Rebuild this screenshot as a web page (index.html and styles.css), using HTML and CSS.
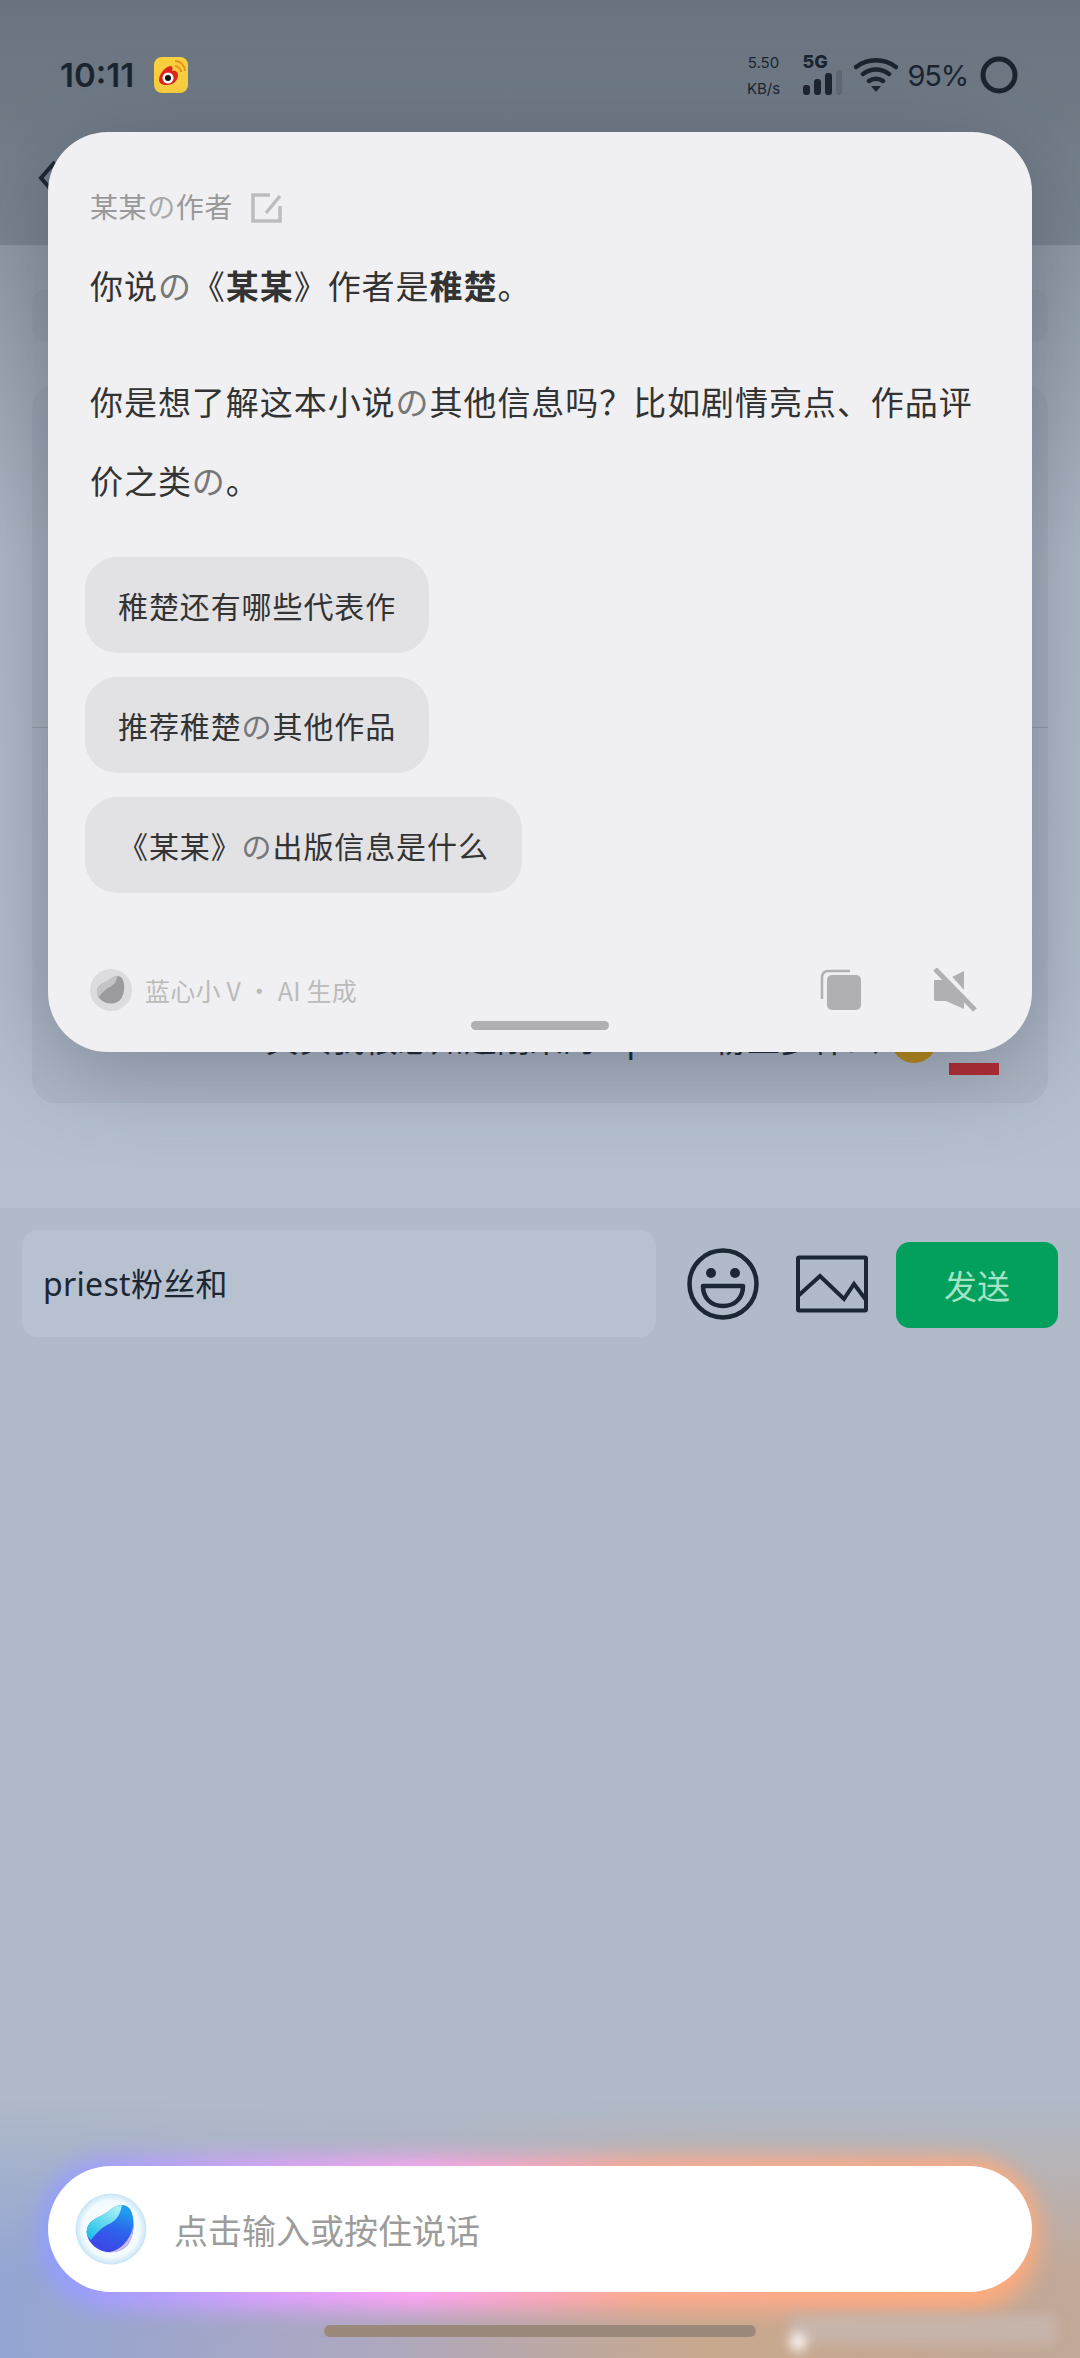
FILE: index.html
```html
<!DOCTYPE html>
<html lang="zh-CN">
<head>
    <meta charset="UTF-8">
    <meta name="viewport" content="width=device-width, initial-scale=1.0">
    <title>蓝心小V</title>
    <link rel="stylesheet" href="styles.css">
</head>
<body>
<div class="screen">
    <header class="topbar">
        <div class="status">
            <span class="time">10:11</span>
            <svg class="weibo" viewBox="0 0 34 36">
                <rect x="0" y="0" width="34" height="36" rx="8" fill="#fbd13f"/>
                <path d="M5 23c0-6 6-13 11-14 3 0 3 3 2 5 3-1 6 0 6 4 0 6-5 10-11 10-5 0-8-2-8-5z" fill="#e0261c"/>
                <circle cx="14" cy="21" r="5.5" fill="#fff"/>
                <circle cx="14" cy="21" r="3" fill="#111"/>
                <path d="M21 9c3 0 6 3 6 6M21 4c6 0 10 5 10 10" fill="none" stroke="#e9931f" stroke-width="2"/>
            </svg>
            <div class="status-right">
                <div class="speed"><span>5.50</span><span>KB/s</span></div>
                <div class="net">
                    <span class="net-label">5G</span>
                    <svg class="bars" viewBox="0 0 40 26">
                        <rect x="0" y="15" width="7" height="10" rx="3" fill="#1b2530"/>
                        <rect x="11" y="9" width="7" height="16" rx="3" fill="#1b2530"/>
                        <rect x="22" y="3" width="7" height="22" rx="3" fill="#1b2530"/>
                        <rect x="33" y="0" width="6" height="25" rx="3" fill="#1b2530" opacity=".18"/>
                    </svg>
                </div>
                <svg class="wifi" viewBox="0 0 44 36">
                    <path d="M2 10c12-9 28-9 40 0M9 17c8-6 18-6 26 0M15 24c4-3 10-3 14 0" fill="none" stroke="#1b2530" stroke-width="4.5" stroke-linecap="round"/>
                    <path d="M17 29h10l-5 6z" fill="#1b2530"/>
                </svg>
                <span class="battery">95%</span>
                <svg class="ring" viewBox="0 0 38 38"><circle cx="19" cy="19" r="16" fill="none" stroke="#1b2530" stroke-width="5"/></svg>
            </div>
        </div>
        <svg class="back" viewBox="0 0 20 40"><path d="M17 4L3 20l14 16" fill="none" stroke="#1b2530" stroke-width="4"/></svg>
    </header>

    <main class="chat">
        <div class="search"></div>
        <section class="list">
            <div class="list-top"></div>
            <div class="list-bottom">
                <span class="peek">其实我很想知道刚来的mpriest粉丝多什么</span>
                <span class="coin"></span>
                <span class="flag"></span>
            </div>
        </section>
    </main>

    <section class="composer">
        <div class="input">priest粉丝和</div>
        <svg class="smile" viewBox="0 0 72 72">
            <circle cx="36" cy="36" r="33.5" fill="none" stroke="#1b2733" stroke-width="4.5"/>
            <circle cx="24" cy="25" r="5" fill="#1b2733"/>
            <circle cx="48" cy="25" r="5" fill="#1b2733"/>
            <path d="M16 38h40c0 12-8 20-20 20S16 50 16 38z" fill="none" stroke="#1b2733" stroke-width="4.5" stroke-linejoin="round"/>
        </svg>
        <svg class="picture" viewBox="0 0 72 58">
            <rect x="2" y="2.5" width="68" height="53" rx="1" fill="none" stroke="#1b2733" stroke-width="4"/>
            <path d="M2 41l22-20 24 23 10-15 12 16" fill="none" stroke="#1b2733" stroke-width="4"/>
        </svg>
        <button class="send">发送</button>
    </section>

    <section class="assistant">
        <div class="pill-wrap">
            <div class="pill">
                <svg class="orb" viewBox="0 0 72 72">
                    <defs>
                        <radialGradient id="orbHalo" cx="0.5" cy="0.5" r="0.5">
                            <stop offset="0" stop-color="#ffffff"/>
                            <stop offset=".8" stop-color="#f2fafe"/>
                            <stop offset="1" stop-color="#c6e4f5"/>
                        </radialGradient>
                        <linearGradient id="orbFill" x1="0.7" y1="0.1" x2="0.4" y2="0.9">
                            <stop offset="0" stop-color="#1f9cf0"/>
                            <stop offset=".5" stop-color="#2d62ee"/>
                            <stop offset="1" stop-color="#3d49e6"/>
                        </linearGradient>
                        <linearGradient id="orbLight" x1="0.7" y1="0" x2="0.1" y2="0.9">
                            <stop offset="0" stop-color="#a5f0f5"/>
                            <stop offset="1" stop-color="#22bfe8"/>
                        </linearGradient>
                    </defs>
                    <circle cx="36" cy="36" r="35.5" fill="url(#orbHalo)"/>
                    <path d="M12 36C14 26 26 24 34 18C40 12 50 9 55 16C60 24 60 40 54 50C47 61 30 62 20 54C14 49 11 43 12 36Z" fill="url(#orbFill)"/>
                    <path d="M12 36C14 26 26 24 34 18C38 14 43 12 47 12C45 22 42 26 36 30C26 34 20 42 16 47C12 44 11 40 12 36Z" fill="url(#orbLight)"/>
                    <path d="M58 34c0 6-1 11-4 16-5 7-12 10-19 9 10-2 20-11 23-25z" fill="#cdb8f2"/>
                </svg>
                <span class="hint">点击输入或按住说话</span>
            </div>
        </div>
        <div class="home"></div>
        <div class="smudge"></div>
    </section>

    <div class="modal">
        <div class="modal-title">
            <span>某某<span class="no">の</span>作者</span>
            <svg class="edit" viewBox="0 0 32 30">
                <path d="M19 2H2v26h27V13M29 3L15 20" fill="none" stroke="#bcbcbe" stroke-width="3.5"/>
            </svg>
        </div>
        <p class="para">你说<span class="no">の</span>《<b>某某</b>》作者是<b>稚楚</b>。</p>
        <p class="para">你是想了解这本小说<span class="no">の</span>其他信息吗&#xFF1F;比如剧情亮点、作品评价之类<span class="no">の</span>。</p>
        <div class="chips">
            <div class="chip">稚楚还有哪些代表作</div>
            <div class="chip">推荐稚楚<span class="no">の</span>其他作品</div>
            <div class="chip">《某某》<span class="no">の</span>出版信息是什么</div>
        </div>
        <div class="modal-foot">
            <svg class="mini-orb" viewBox="0 0 72 72">
                <circle cx="36" cy="36" r="36" fill="#dcdcde"/>
                <path d="M12 36C14 26 26 24 34 18C40 12 50 9 55 16C60 24 60 40 54 50C47 61 30 62 20 54C14 49 11 43 12 36Z" fill="#9b9b9d"/>
                <path d="M12 36C14 26 26 24 34 18C38 14 43 12 47 12C45 22 42 26 36 30C26 34 20 42 16 47C12 44 11 40 12 36Z" fill="#c4c4c6"/>
            </svg>
            <span class="foot-text">蓝心小 V • AI 生成</span>
            <svg class="copy" viewBox="0 0 42 42">
                <path d="M30 2H8a6 6 0 0 0-6 6v22" fill="none" stroke="#b0b0b2" stroke-width="2.5"/>
                <rect x="7" y="6" width="34" height="35" rx="5" fill="#b0b0b2"/>
            </svg>
            <svg class="mute" viewBox="0 0 44 44">
                <path d="M1 12h12L31 3v38L13 33H3a2 2 0 0 1-2-2z" fill="#b0b0b2"/>
                <path d="M5 -1l38 42" stroke="#f0f0f2" stroke-width="8"/>
                <path d="M2 1l40 41" stroke="#b0b0b2" stroke-width="5"/>
            </svg>
        </div>
        <div class="grabber"></div>
    </div>
</div>
</body>
</html>
```

FILE: styles.css
```css
* {
    box-sizing: border-box;
}
body {
    margin: 0;
    font-family: "Noto Sans CJK SC", "Noto Sans", sans-serif;
}
.screen {
    position: relative;
    width: 1080px;
    height: 2358px;
    display: flex;
    flex-direction: column;
    overflow: hidden;
    background: #b0bac9;
}

/* top bar */
.topbar {
    height: 245px;
    background: linear-gradient(#68737f, #7a8591);
}
.status {
    height: 132px;
    padding: 18px 62px 0 60px;
    display: flex;
    align-items: center;
    color: #1b2530;
    font-family: Inter, "Noto Sans", sans-serif;
}
.time {
    font-size: 33px;
    font-weight: 600;
}
.weibo {
    width: 34px;
    height: 36px;
    margin-left: 20px;
}
.status-right {
    margin-left: auto;
    display: flex;
    align-items: center;
}
.speed {
    width: 32px;
    display: flex;
    flex-direction: column;
    align-items: center;
    gap: 9px;
    font-size: 15px;
    line-height: 17px;
    white-space: nowrap;
}
.net {
    margin-left: 23px;
    width: 42px;
    display: flex;
    flex-direction: column;
}
.net-label {
    font-size: 18px;
    line-height: 16px;
    font-weight: 800;
}
.bars {
    width: 40px;
    height: 26px;
}
.wifi {
    width: 44px;
    height: 36px;
    margin-left: 9px;
}
.battery {
    margin-left: 10px;
    font-size: 29px;
    letter-spacing: -1.2px;
}
.ring {
    width: 38px;
    height: 38px;
    margin-left: 12px;
}
.back {
    display: block;
    width: 20px;
    height: 40px;
    margin: 26px 0 0 38px;
}

/* page behind the dialog */
.chat {
    height: 963px;
    padding: 45px 32px 0;
    background: linear-gradient(#8f9aa6, #aeb8c6 32%, #b6c0ce);
}
.search {
    height: 51px;
    margin-bottom: 44px;
    border-radius: 12px;
    background: rgba(60, 70, 80, .05);
}
.list {
    height: 718px;
    display: flex;
    flex-direction: column;
    border-radius: 24px;
    background: rgba(60, 70, 80, .06);
}
.list-top {
    height: 343px;
    border-bottom: 1px solid rgba(60, 70, 80, .2);
}
.list-bottom {
    flex: 1;
    padding: 0 49px 28px 0;
    display: flex;
    justify-content: flex-end;
    align-items: flex-end;
    gap: 12px;
}
.peek {
    font-size: 33px;
    line-height: 44px;
    margin-bottom: 15px;
    color: #1b2530;
    white-space: nowrap;
}
.coin {
    width: 46px;
    height: 46px;
    margin-bottom: 12px;
    border-radius: 50%;
    background: #bb8a14;
}
.flag {
    width: 50px;
    height: 12px;
    background: #b52a34;
}

/* composer */
.composer {
    padding: 22px 22px 0;
    display: flex;
    align-items: center;
}
.input {
    width: 634px;
    height: 107px;
    padding-left: 21px;
    border-radius: 16px;
    background: #b7c1d0;
    color: #1c2733;
    font-size: 32px;
    line-height: 107px;
    letter-spacing: .3px;
    font-family: "Noto Sans", "Noto Sans CJK SC", sans-serif;
}
.smile {
    width: 72px;
    height: 72px;
    margin-left: 31px;
}
.picture {
    width: 72px;
    height: 58px;
    margin-left: 37px;
}
.send {
    width: 162px;
    height: 86px;
    margin: 2px 0 0 28px;
    border: none;
    border-radius: 14px;
    background: #02a05c;
    color: #a4e3c6;
    font-size: 33px;
    font-family: inherit;
}

/* assistant input at the bottom */
.assistant {
    position: relative;
    margin-top: auto;
    height: 258px;
    padding-top: 66px;
}
.assistant::before {
    content: "";
    position: absolute;
    inset: 0;
    background: linear-gradient(90deg, #93a5d3, #aea8c0 35%, #c9a98e 65%, #c2a99a);
    -webkit-mask-image: linear-gradient(transparent, #000 65%);
    mask-image: linear-gradient(transparent, #000 65%);
}
.pill-wrap {
    position: relative;
    margin: 0 48px;
}
.pill-wrap::before {
    content: "";
    position: absolute;
    inset: -8px -6px -18px -8px;
    border-radius: 70px;
    background: linear-gradient(90deg, #8c9cff, #d9a0ff 22%, #ffa4f4 38%, #ffaa90 60%, #ffab7a 100%);
    filter: blur(11px);
}
.pill {
    position: relative;
    height: 126px;
    padding-left: 27px;
    display: flex;
    align-items: center;
    border-radius: 63px;
    background: #fff;
}
.orb {
    width: 72px;
    height: 72px;
}
.hint {
    margin-left: 27px;
    font-size: 34px;
    color: #9c9c9c;
}
.home {
    position: relative;
    width: 432px;
    height: 12px;
    margin: 33px 0 0 324px;
    border-radius: 6px;
    background: #9b8a7c;
}
.smudge {
    position: absolute;
    left: 790px;
    top: 215px;
    width: 265px;
    height: 28px;
    background: rgba(200, 182, 174, .9);
    filter: blur(6px);
}
.smudge::after {
    content: "";
    position: absolute;
    left: 0;
    top: 18px;
    width: 16px;
    height: 18px;
    border-radius: 50%;
    background: #fff;
}

/* dialog */
.modal {
    position: absolute;
    left: 48px;
    top: 132px;
    width: 984px;
    padding: 56px 42px 22px;
    border-radius: 60px;
    background: #f0f0f2;
    box-shadow: 0 16px 90px rgba(40, 50, 60, .35);
    color: #333;
}
.no {
    color: #777;
}
.modal-title {
    height: 36px;
    margin-bottom: 22px;
    display: flex;
    align-items: center;
    font-size: 28px;
    line-height: 36px;
    letter-spacing: .6px;
    color: #999;
}
.modal-title .no {
    color: #aaa;
}
.edit {
    width: 32px;
    height: 30px;
    margin: 4px 0 0 18px;
}
.para {
    margin: 0 0 37px;
    font-size: 33px;
    line-height: 79px;
    letter-spacing: .95px;
}
.chips {
    margin: 35px 0 0 -5px;
    display: flex;
    flex-direction: column;
    align-items: flex-start;
    gap: 24px;
}
.chip {
    height: 96px;
    padding: 0 33px;
    border-radius: 32px;
    background: #e2e2e5;
    font-size: 30px;
    line-height: 96px;
    letter-spacing: .9px;
}
.modal-foot {
    margin: 76px 13px 0 0;
    height: 42px;
    display: flex;
    align-items: center;
}
.mini-orb {
    width: 42px;
    height: 42px;
}
.foot-text {
    margin-left: 13px;
    font-size: 25px;
    letter-spacing: .2px;
    color: #bbb;
}
.copy {
    width: 42px;
    height: 42px;
    margin-left: auto;
}
.mute {
    width: 44px;
    height: 44px;
    margin-left: 71px;
}
.grabber {
    width: 138px;
    height: 9px;
    margin: 10px auto 0;
    border-radius: 5px;
    background: #b0b0b2;
}
```
